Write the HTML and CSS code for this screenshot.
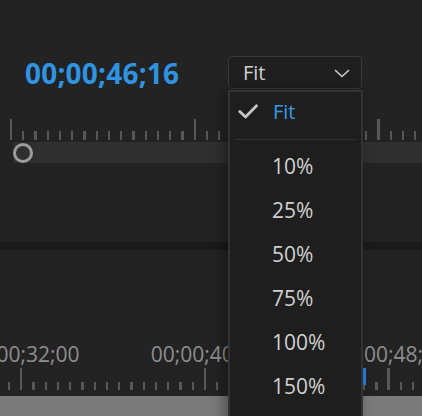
FILE: index.html
```html
<!DOCTYPE html>
<html>
<head>
<meta charset="utf-8">
<link rel="stylesheet" href="styles.css">
</head>
<body>
<div class="app">
  <section class="monitor">
    <div class="header">
      <div class="timecode">00;00;46;16</div>
      <div class="zoom-select">
        <span class="select-value">Fit</span>
        <svg class="chevron" width="16" height="9" viewBox="0 0 16 9"><polyline points="1.5,1.5 8,7.5 14.5,1.5" fill="none" stroke="#c8c8c8" stroke-width="1.7" stroke-linecap="round" stroke-linejoin="round"/></svg>
        <div class="menu">
          <div class="menu-item selected">
            <svg class="check" width="20" height="15" viewBox="0 0 20 15"><polyline points="1.8,7.5 7.5,13 18.5,1.8" fill="none" stroke="#c6c6c6" stroke-width="2.8" stroke-linecap="round" stroke-linejoin="round"/></svg>
            <span class="item-label">Fit</span>
          </div>
          <div class="menu-sep"></div>
          <div class="menu-item"><span class="item-label">10%</span></div>
          <div class="menu-item"><span class="item-label">25%</span></div>
          <div class="menu-item"><span class="item-label">50%</span></div>
          <div class="menu-item"><span class="item-label">75%</span></div>
          <div class="menu-item"><span class="item-label">100%</span></div>
          <div class="menu-item"><span class="item-label">150%</span></div>
        </div>
      </div>
    </div>
    <div class="ruler-top"></div>
    <div class="track"><div class="playhead-knob"></div></div>
  </section>
  <div class="divider"></div>
  <section class="timeline">
    <div class="labels">
      <span class="tc-label">00;00;32;00</span>
      <span class="tc-label">00;00;40;00</span>
      <span class="tc-label">00;00;48;00</span>
    </div>
    <div class="ruler-bottom"><div class="playhead-mark"></div></div>
  </section>
  <div class="scroll-bar"></div>
</div>
</body>
</html>
```
FILE: styles.css
```css
html, body {
  margin: 0;
  padding: 0;
  background: #232323;
  width: 422px;
  height: 416px;
  overflow: hidden;
}

.app {
  width: 422px;
  height: 416px;
  font-family: "Open Sans", "Noto Sans", sans-serif;
  background: #232323;
  position: relative;
}

.monitor {
  height: 242px;
  box-sizing: border-box;
  padding-top: 56px;
}

.header {
  display: flex;
  align-items: center;
  height: 33px;
  padding-left: 25px;
}

.timecode {
  width: 203px;
  color: #2e93e0;
  font-weight: 700;
  font-size: 28px;
  letter-spacing: 0.2px;
}

.zoom-select {
  position: relative;
  z-index: 5;
  box-sizing: border-box;
  width: 134px;
  height: 33px;
  border: 1px solid #3a3a3a;
  border-radius: 4px;
  background: #1f1f1f;
  display: flex;
  align-items: center;
  justify-content: space-between;
  padding: 0 11px 0 14px;
}

.select-value {
  color: #d2d2d2;
  font-size: 20px;
}

.chevron {
  display: block;
  margin-top: 1px;
}

.menu {
  position: absolute;
  left: -1px;
  top: 33px;
  width: 135px;
  height: 340px;
  box-sizing: border-box;
  background: #1e1e1e;
  border: 2px solid #333333;
  box-shadow: -4px 0 12px rgba(0, 0, 0, 0.35);
}

.menu-item {
  display: flex;
  align-items: center;
  height: 44px;
  padding-left: 42px;
  color: #d0d0d0;
  font-size: 21px;
}

.menu-item.selected {
  height: 38px;
  padding-left: 8px;
  color: #3a9ae6;
  font-size: 20px;
}

.check {
  display: block;
  width: 20px;
  margin-right: 15px;
  margin-top: 1px;
}

.menu-sep {
  height: 1px;
  background: #353535;
  margin: 9px 6px 4px 6px;
}

.ruler-top {
  margin-top: 30px;
  height: 21px;
  background:
    repeating-linear-gradient(90deg, #575757 0 2px, transparent 2px 183.75px) 10px 0 / calc(100% - 10px) 21px no-repeat,
    repeating-linear-gradient(90deg, #575757 0 2px, transparent 2px 12.25px) 10px 100% / calc(100% - 10px) 9px no-repeat;
}

.track {
  margin-top: 2px;
  margin-left: 13px;
  height: 21px;
  background: #2f2f2f;
  display: flex;
  align-items: center;
}

.playhead-knob {
  box-sizing: border-box;
  width: 20px;
  height: 20px;
  border-radius: 50%;
  border: 3.5px solid #9c9c9c;
  background: #2f2f2f;
}

.divider {
  height: 8px;
  background: #1a1a1a;
}

.timeline {
  height: 146px;
  box-sizing: border-box;
  padding-top: 92px;
}

.labels {
  display: flex;
  margin-left: -33px;
  height: 24px;
  line-height: 24px;
  white-space: nowrap;
}

.tc-label {
  flex: 0 0 183.75px;
  color: #8e8e8e;
  font-size: 21px;
}

.ruler-bottom {
  position: relative;
  margin-top: 2px;
  height: 22px;
  background:
    repeating-linear-gradient(90deg, #585858 0 2px, transparent 2px 183.75px) 20px 0 / calc(100% - 20px) 22px no-repeat,
    repeating-linear-gradient(90deg, #585858 0 2px, transparent 2px 12.25px) 7.75px 100% / calc(100% - 7.75px) 8px no-repeat;
}

.playhead-mark {
  position: absolute;
  left: 361px;
  top: 0;
  width: 5px;
  height: 17px;
  background: #2b7fdc;
}

.scroll-bar {
  height: 20px;
  background: #7a7a7a;
}
```
